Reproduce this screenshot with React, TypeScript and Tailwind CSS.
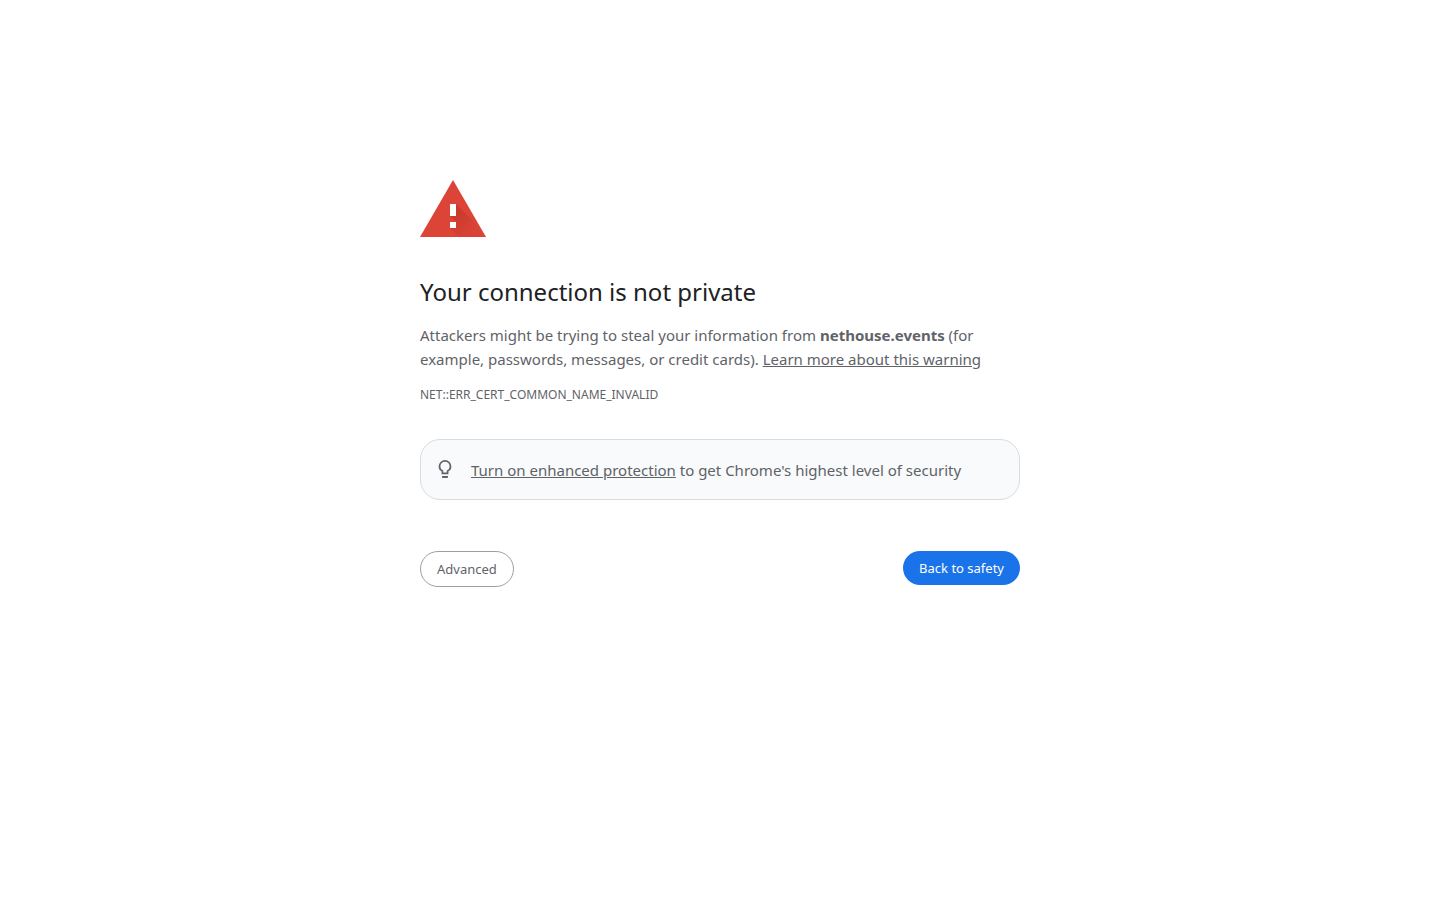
import React from "react";

function WarningIcon() {
  return (
    <svg
      className="block h-[72px] w-[72px]"
      viewBox="0 0 72 72"
      role="img"
      aria-label="Warning"
    >
      <defs>
        <linearGradient
          id="shade"
          gradientUnits="userSpaceOnUse"
          x1="33"
          y1="36"
          x2="54"
          y2="57"
        >
          <stop offset="0" stopColor="#a52714" stopOpacity="0.4" />
          <stop offset="1" stopColor="#a52714" stopOpacity="0.04" />
        </linearGradient>
      </defs>
      <path d="M0 65 33 8l33 57z" fill="#db4437" />
      <path d="M36 32 53.200 49.200 62.300 65H39l-9-9 6-6-6-6z" fill="url(#shade)" />
      <path d="M30 32h6v12h-6zM30 50h6v6h-6z" fill="#fff" />
    </svg>
  );
}

function BulbIcon() {
  return (
    <svg
      className="block h-6 w-6 shrink-0"
      viewBox="0 0 24 24"
      fill="none"
      stroke="#5f6368"
      aria-hidden="true"
    >
      <path
        d="M9.400 15.300V13c-1.700-.9-2.900-2.600-2.900-4.600a5.500 5.500 0 0 1 11 0c0 2-1.200 3.700-2.900 4.600v2.300z"
        strokeWidth="1.700"
      />
      <path d="M9 17.900h6v1c0 .7-.5 1.200-1.200 1.200h-3.600c-.7 0-1.200-.5-1.200-1.200z" fill="#5f6368" stroke="none" />
    </svg>
  );
}

export default function App() {
  return (
    <main className="min-h-screen bg-white px-6 font-['Noto_Sans',sans-serif] text-[15px] leading-6 text-[#5f6368]">
      <div className="mx-auto w-full max-w-[600px] pt-[172px]">
        <WarningIcon />
        <h1 className="mt-8 text-2xl leading-8 text-[#202124]">
          Your connection is not private
        </h1>
        <p className="mt-[15px]">
          Attackers might be trying to steal your information from{" "}
          <strong className="font-bold">nethouse.events</strong> (for example,
          passwords, messages, or credit cards).{" "}
          <a href="#learn-more" className="underline">
            Learn more about this warning
          </a>
        </p>
        <p className="mt-[14px] text-xs leading-5">NET::ERR_CERT_COMMON_NAME_INVALID</p>
        <div className="mt-[34px] flex items-center gap-[14px] rounded-[20px] border border-[#dadce0] bg-[#f8fafb] px-3 pt-[18px] pb-[17px]">
          <BulbIcon />
          <p>
            <a href="#enhanced-protection" className="underline">
              Turn on enhanced protection
            </a>{" "}
            to get Chrome's highest level of security
          </p>
        </div>
        <div className="mt-[51px] flex items-start justify-between text-[13px] leading-[18px]">
          <button
            type="button"
            className="rounded-full border border-[#9aa0a6] bg-white px-4 py-2"
          >
            Advanced
          </button>
          <button
            type="button"
            className="rounded-full bg-[#1a73e8] px-4 py-2 text-white"
          >
            Back to safety
          </button>
        </div>
      </div>
    </main>
  );
}
